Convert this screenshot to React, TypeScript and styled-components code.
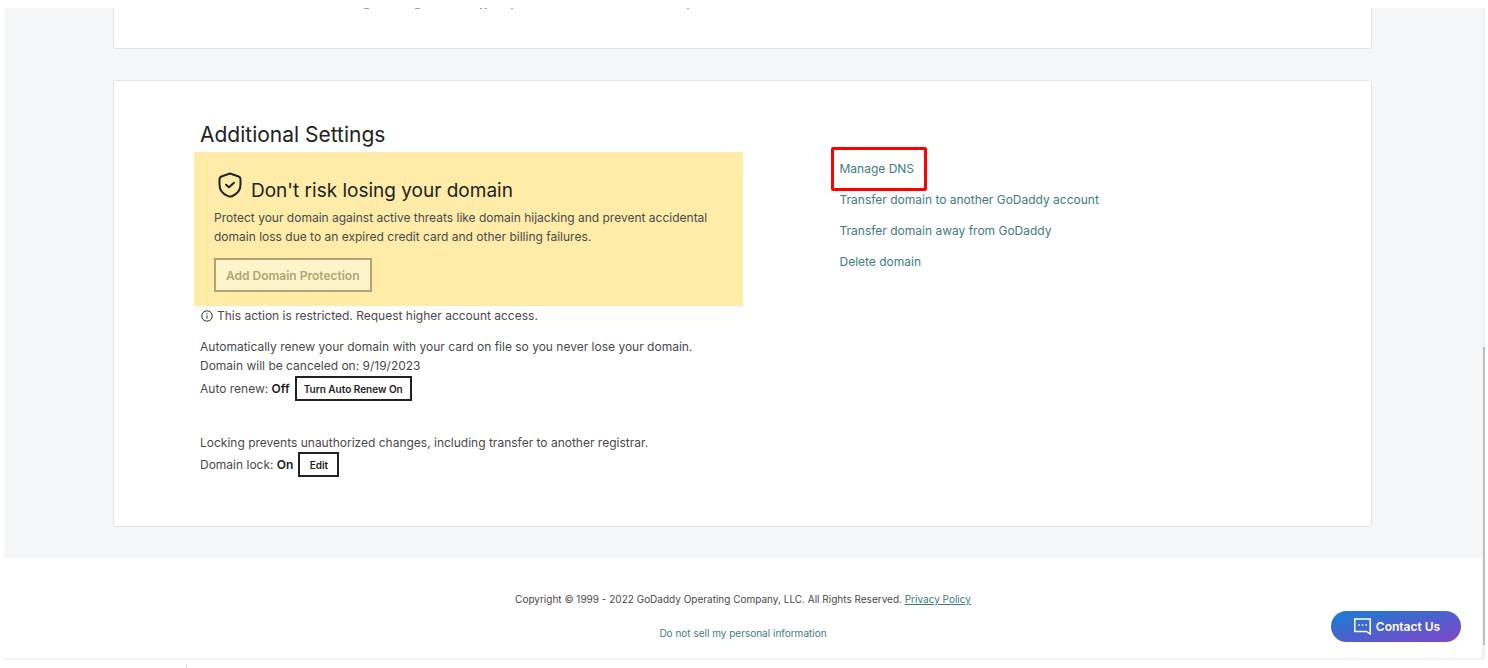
import React from "react";
import styled, { createGlobalStyle } from "styled-components";

const GlobalStyle = createGlobalStyle`
  *, *::before, *::after { box-sizing: border-box; }
  body {
    margin: 0;
    background: #ffffff;
    color: #4a4a4a;
    font-family: Inter, "Liberation Sans", sans-serif;
    font-size: 12px;
    line-height: 19px;
  }
  h2, h3, p, ul { margin: 0; padding: 0; font-weight: 400; }
  svg { display: block; flex: none; }
`;

const Screen = styled.div`
  position: relative;
  padding: 8px 3px 0 4px;
`;

const Viewport = styled.div`
  display: flex;
  border-bottom: 2px solid #f2f2f3;
`;

const Page = styled.div`
  flex: 1;
  min-width: 0;
`;

const Scrollbar = styled.div`
  display: flex;
  flex-direction: column;
  justify-content: flex-end;
  width: 3px;
  padding: 0 0 13px 1px;
  background: #eff0f1;
`;

const ScrollThumb = styled.div`
  height: 298px;
  background: #bfbfbf;
`;

const Main = styled.main`
  display: flex;
  flex-direction: column;
  gap: 31px;
  padding: 0 33px 31px 32px;
  background: #f4f6f8;
`;

const Card = styled.section<{ $cut?: boolean }>`
  width: 100%;
  max-width: 1259px;
  margin: 0 auto;
  padding: ${(p) => (p.$cut ? "0 86px 37px" : "40px 86px 49px")};
  background: #ffffff;
  border: 1px solid #e2e4e7;
  border-top-width: ${(p) => (p.$cut ? "0" : "1px")};
  border-radius: ${(p) => (p.$cut ? "0 0 3px 3px" : "3px")};
`;

const Columns = styled.div`
  display: grid;
  grid-template-columns: 1fr 1fr;
`;

const Title = styled.h2`
  color: #222222;
  font-size: 21px;
  line-height: 27px;
`;

const Banner = styled.div`
  margin: 4px 0 0 -6px;
  padding: 20px 20px 14px;
  background: #feeca8;
`;

const BannerTitle = styled.div`
  display: flex;
  align-items: flex-start;
  gap: 9px;
  padding-left: 4px;
  color: #222222;
`;

const BannerHeading = styled.h3`
  padding-top: 7px;
  font-size: 19px;
  line-height: 24px;
`;

const BannerText = styled.p`
  margin: 5px 0 12px;
`;

const Button = styled.button<{ $large?: boolean }>`
  height: ${(p) => (p.$large ? "34px" : "25px")};
  min-width: 41px;
  padding: 0 ${(p) => (p.$large ? "10px" : "7px")};
  background: #ffffff;
  border: 2px solid #222222;
  color: #222222;
  font: 600 ${(p) => (p.$large ? "12px" : "10px")} Inter, "Liberation Sans", sans-serif;
  &:disabled {
    background: #fef4cc;
    border-color: #b0a572;
    color: #b0a572;
  }
`;

const Notice = styled.p`
  display: flex;
  align-items: center;
  gap: 4px;
  margin-bottom: 12px;
  padding-left: 1px;
`;

const Setting = styled.div`
  display: flex;
  align-items: center;
  gap: 5px;
  strong { color: #222222; font-weight: 600; }
`;

const Block = styled.div<{ $gap?: boolean }>`
  margin-top: ${(p) => (p.$gap ? "32px" : "0")};
  ${Setting} { margin-top: ${(p) => (p.$gap ? "0" : "1px")}; }
`;

const Links = styled.ul`
  display: flex;
  flex-direction: column;
  align-items: flex-start;
  gap: 12px;
  padding: 38px 0 0 97px;
  list-style: none;
`;

const LinkItem = styled.li`
  position: relative;
`;

const Highlight = styled.span`
  position: absolute;
  inset: -12px -13px -13px -9px;
  border: 3px solid #ff0000;
  border-radius: 2px;
  pointer-events: none;
`;

const Anchor = styled.a<{ $underline?: boolean }>`
  color: #3f7c80;
  text-decoration: ${(p) => (p.$underline ? "underline" : "none")};
`;

const Footer = styled.footer`
  display: flex;
  flex-direction: column;
  align-items: center;
  gap: 15px;
  padding: 32px 0 15px;
  font-size: 10px;
`;

const Contact = styled.button`
  position: absolute;
  right: 27px;
  bottom: 26px;
  display: flex;
  align-items: center;
  justify-content: center;
  gap: 5px;
  width: 130px;
  height: 31px;
  padding: 0 0 0 2px;
  border: 0;
  border-radius: 16px;
  background: linear-gradient(to bottom right, #1f7ad2 8%, #7a48c8 92%);
  color: #ffffff;
  font: 600 12px Inter, "Liberation Sans", sans-serif;
`;

const Shelf = styled.div`
  padding: 4px 0 0 182px;
`;

const ShelfDivider = styled.div`
  width: 1px;
  height: 4px;
  background: #d8d8d8;
`;

const descenders = [
  { x: 164, w: 5 },
  { x: 215, w: 5 },
  { x: 280, w: 2 },
  { x: 285, w: 2 },
  { x: 311, w: 2 },
  { x: 487, w: 2 },
];

const CutLine = () => (
  <svg width="500" height="3" aria-hidden="true">
    {descenders.map((d) => (
      <rect key={d.x} x={d.x} y="0" width={d.w} height="1" fill="#a0a0a0" />
    ))}
  </svg>
);

const ShieldIcon = () => (
  <svg width="24" height="26" viewBox="0 0 24 26" fill="none" stroke="currentColor" strokeWidth="2" strokeLinecap="round" strokeLinejoin="round" aria-hidden="true">
    <path d="M12 1.500 4 4.200Q1.500 5 1.500 7.500V12.500C1.500 18.500 5.500 22.300 10 24.200Q12 25 14 24.200C18.500 22.300 22.500 18.500 22.500 12.500V7.500Q22.500 5 20 4.200Z" />
    <path d="m8 12.700 3 2.500 5-4.500" />
  </svg>
);

const InfoIcon = () => (
  <svg width="12" height="12" viewBox="0 0 12 12" fill="none" stroke="#333333" aria-hidden="true">
    <circle cx="6" cy="6" r="5.200" />
    <path d="M6 5.300v3.400M6 3v1.200" />
  </svg>
);

const ChatIcon = () => (
  <svg width="17" height="17" viewBox="0 0 17 17" fill="none" stroke="currentColor" strokeWidth="1.500" aria-hidden="true">
    <path d="M.8 1h15.400v15l-3.700-2.600H.8z" />
    <path d="M4.300 7h1.500M7.800 7h1.500M11.300 7h1.500" />
  </svg>
);

const links = [
  "Manage DNS",
  "Transfer domain to another GoDaddy account",
  "Transfer domain away from GoDaddy",
  "Delete domain",
];

export default function App() {
  return (
    <>
      <GlobalStyle />
      <Screen>
        <Viewport>
          <Page>
            <Main>
              <Card $cut>
                <CutLine />
              </Card>
              <Card>
                <Columns>
                  <div>
                    <Title>Additional Settings</Title>
                    <Banner>
                      <BannerTitle>
                        <ShieldIcon />
                        <BannerHeading>Don't risk losing your domain</BannerHeading>
                      </BannerTitle>
                      <BannerText>
                        Protect your domain against active threats like domain hijacking and prevent accidental
                        <br />
                        domain loss due to an expired credit card and other billing failures.
                      </BannerText>
                      <Button $large disabled>Add Domain Protection</Button>
                    </Banner>
                    <Notice>
                      <InfoIcon />
                      This action is restricted. Request higher account access.
                    </Notice>
                    <Block>
                      <p>Automatically renew your domain with your card on file so you never lose your domain.</p>
                      <p>Domain will be canceled on: 9/19/2023</p>
                      <Setting>
                        <span>Auto renew: <strong>Off</strong></span>
                        <Button>Turn Auto Renew On</Button>
                      </Setting>
                    </Block>
                    <Block $gap>
                      <p>Locking prevents unauthorized changes, including transfer to another registrar.</p>
                      <Setting>
                        <span>Domain lock: <strong>On</strong></span>
                        <Button>Edit</Button>
                      </Setting>
                    </Block>
                  </div>
                  <Links>
                    {links.map((label, i) => (
                      <LinkItem key={label}>
                        <Anchor href="#">{label}</Anchor>
                        {i === 0 && <Highlight />}
                      </LinkItem>
                    ))}
                  </Links>
                </Columns>
              </Card>
            </Main>
            <Footer>
              <p>
                Copyright © 1999 - 2022 GoDaddy Operating Company, LLC. All Rights Reserved.{" "}
                <Anchor href="#" $underline>Privacy Policy</Anchor>
              </p>
              <Anchor href="#">Do not sell my personal information</Anchor>
            </Footer>
          </Page>
          <Scrollbar>
            <ScrollThumb />
          </Scrollbar>
        </Viewport>
        <Shelf>
          <ShelfDivider />
        </Shelf>
        <Contact>
          <ChatIcon />
          Contact Us
        </Contact>
      </Screen>
    </>
  );
}
